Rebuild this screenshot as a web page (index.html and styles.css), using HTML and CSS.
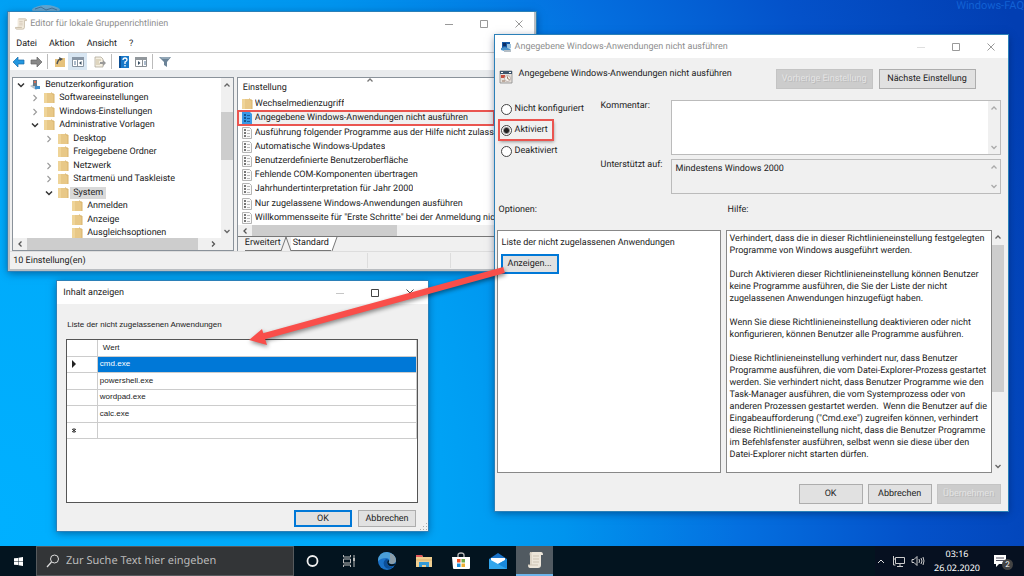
FILE: index.html
```html
<!DOCTYPE html>
<html lang="de">
<head>
<meta charset="utf-8">
<meta name="viewport" content="width=device-width, initial-scale=1">
<title>Editor für lokale Gruppenrichtlinien</title>
<link rel="stylesheet" href="styles.css">
</head>
<body>
<svg class="defs" aria-hidden="true">
  <symbol id="folder" viewBox="0 0 12 12"><path d="M1 1h7l1 1h2v9H1z" fill="#e8c887"/><path d="M1 1h3v10H1z" fill="#efd498"/><path d="M8 1h1v1h2v9" fill="none" stroke="#d9b36a"/></symbol>
  <symbol id="policy" viewBox="0 0 12 12"><path d="M1.500.500h7l2 2v9h-9z" fill="#fafafa" stroke="#b5b5b5"/><path d="M3 2h2v2H3zm0 3h2v2H3zm0 3h2v2H3z" fill="#777"/><path d="M6 3.500h3M6 6.500h3M6 9.500h3" stroke="#bbb"/></symbol>
  <symbol id="policy-on" viewBox="0 0 12 12"><path d="M1 0h8l2 2v10H1z" fill="#3898e6"/><path d="M3 2h2v2H3zm0 3h2v2H3zm0 3h2v2H3z" fill="#12548f"/><path d="M6 3.500h3M6 6.500h3M6 9.500h3" stroke="#175f9e"/></symbol>
  <symbol id="right" viewBox="0 0 8 8"><path d="M2.500 1l3 3-3 3" fill="none" stroke="#999" stroke-width="1.100"/></symbol>
  <symbol id="open" viewBox="0 0 8 8"><path d="M1 2.500l3 3 3-3" fill="none" stroke="#333" stroke-width="1.500"/></symbol>
  <symbol id="a-up" viewBox="0 0 8 8"><path d="M1.500 5.500L4 3l2.500 2.500" fill="none" stroke="currentColor" stroke-width="1.300"/></symbol>
  <symbol id="a-down" viewBox="0 0 8 8"><path d="M1.500 3L4 5.500 6.500 3" fill="none" stroke="currentColor" stroke-width="1.300"/></symbol>
  <symbol id="a-left" viewBox="0 0 8 8"><path d="M5.500 1.500L3 4l2.500 2.500" fill="none" stroke="currentColor" stroke-width="1.300"/></symbol>
  <symbol id="a-right" viewBox="0 0 8 8"><path d="M3 1.500L5.500 4 3 6.500" fill="none" stroke="currentColor" stroke-width="1.300"/></symbol>
  <symbol id="min" viewBox="0 0 8 8"><path d="M0 4.500h8" stroke="currentColor"/></symbol>
  <symbol id="max" viewBox="0 0 8 8"><path d="M.500.500h7v7h-7z" fill="none" stroke="currentColor"/></symbol>
  <symbol id="close" viewBox="0 0 8 8"><path d="M.500.500l7 7m0-7l-7 7" fill="none" stroke="currentColor"/></symbol>
  <symbol id="scroll" viewBox="0 0 14 14"><path d="M4 1h8q1.500 0 1.500 2H11v8q0 2-2 2H2q-1.500 0-1.500-2H3V3q0-2 1-2z" fill="#f1e9dc"/><path d="M4 1h8q1.500 0 1.500 2H11v8q0 2-2 2H2q-1.500 0-1.500-2H8" fill="none" stroke="#b9ab95" stroke-width=".8"/><path d="M5 4h4M5 6h4M5 8h4" stroke="#cbbfae" stroke-width=".8"/></symbol>
</svg>

<main class="desktop">
  <span class="watermark">Windows-FAQ</span>
  <svg class="bin" viewBox="0 0 28 8" aria-hidden="true"><path d="M0 4q6-4 14-4t14 4l-1 4H1z" fill="#8aa8c0" opacity=".7"/><path d="M3 4l6-2 5 3 6-2 5 2" fill="none" stroke="#47759a"/></svg>

  <section class="window editor" aria-label="Editor für lokale Gruppenrichtlinien">
    <header class="titlebar">
      <svg class="i12"><use href="#scroll"/></svg>
      <h1 class="title muted">Editor für lokale Gruppenrichtlinien</h1>
      <div class="controls"><button aria-label="Minimieren"><svg><use href="#min"/></svg></button><button aria-label="Maximieren"><svg><use href="#max"/></svg></button><button aria-label="Schließen"><svg><use href="#close"/></svg></button></div>
    </header>
    <nav class="menu"><button>Datei</button><button>Aktion</button><button>Ansicht</button><button>?</button></nav>
    <div class="toolbar">
      <button aria-label="Zurück"><svg viewBox="0 0 14 12"><path d="M1 6l5-5v3h6v4H6v3z" fill="#2297e0" stroke="#176aa8" stroke-width=".7"/></svg></button>
      <button aria-label="Vorwärts"><svg viewBox="0 0 14 12"><path d="M13 6L8 1v3H2v4h6v3z" fill="#888" stroke="#666" stroke-width=".7"/></svg></button>
      <i class="sep"></i>
      <button aria-label="Nach oben"><svg viewBox="0 0 14 12"><path d="M2 3h5l1-1h4v9H2z" fill="#e6c27c"/><path d="M4 8q1-5 4-5" fill="none" stroke="#4c5358" stroke-width="1.500"/><path d="M6 1l4 2-3 2z" fill="#4c5358"/></svg></button>
      <button class="pressed" aria-label="Struktur anzeigen"><svg viewBox="0 0 14 12"><path d="M1.500 1.500h11v9h-11z" fill="#fff" stroke="#8793a0"/><path d="M1 1h12v3H1z" fill="#8997a6"/><path d="M6.500 4v7" stroke="#8793a0"/><path d="M3 6h2M3 8h2" stroke="#59799b"/><path d="M10.500 5v4L8 7z" fill="#3b5064"/></svg></button>
      <i class="gap"></i>
      <button aria-label="Liste exportieren"><svg viewBox="0 0 14 12"><path d="M2 1h6l2 2v8H2z" fill="#f4efe2" stroke="#a7a08f" stroke-width=".7"/><path d="M3 4h5M3 6h3M3 8h4" stroke="#b5a67e" stroke-width=".7"/><path d="M7 6h3V4l3 3-3 3V8H7z" fill="#999"/></svg></button>
      <i class="sep"></i>
      <button aria-label="Hilfe"><svg viewBox="0 0 14 12"><path d="M2 0h10v12H2z" fill="#1878c8"/><path d="M2 0h2v12H2z" fill="#0d4f94"/><path d="M6 4q0-2 2-2t2 2q0 1-2 2v2M8 9v1.500" fill="none" stroke="#fff" stroke-width="1.300"/></svg></button>
      <button aria-label="Aktionsbereich"><svg viewBox="0 0 14 12"><path d="M1.500 1.500h11v9h-11z" fill="#fff" stroke="#8a8f94"/><path d="M1 1h12v3H1z" fill="#92989d"/><path d="M8.500 4v7" stroke="#8a8f94"/><path d="M10 6h2M10 8h2" stroke="#59799b"/><path d="M4 5v4l2.500-2z" fill="#3b5064"/></svg></button>
      <i class="sep"></i>
      <button aria-label="Filter"><svg viewBox="0 0 14 12"><path d="M1 1h12L9 6v5l-3-2V6z" fill="#6b8397"/><path d="M2 1h10l-1 2H4z" fill="#93a7b7"/></svg></button>
    </div>
    <div class="panes">
      <div class="tree-pane">
        <div class="tree-view">
          <ul class="tree">
            <li class="l0"><svg class="tw"><use href="#open"/></svg><svg class="i12" viewBox="0 0 12 12"><path d="M1 7l4-2 6 3-4 3z" fill="#b7c4ce"/><path d="M4 1h4v6H4z" fill="#697986"/><path d="M5 2h2v2H5z" fill="#d86d55"/><path d="M6 7h5v3H6z" fill="#3e8ecc"/></svg><span>Benutzerkonfiguration</span></li>
            <li class="l1"><svg class="tw"><use href="#right"/></svg><svg class="i12"><use href="#folder"/></svg><span>Softwareeinstellungen</span></li>
            <li class="l1"><svg class="tw"><use href="#right"/></svg><svg class="i12"><use href="#folder"/></svg><span>Windows-Einstellungen</span></li>
            <li class="l1"><svg class="tw"><use href="#open"/></svg><svg class="i12"><use href="#folder"/></svg><span>Administrative Vorlagen</span></li>
            <li class="l2"><svg class="tw"><use href="#right"/></svg><svg class="i12"><use href="#folder"/></svg><span>Desktop</span></li>
            <li class="l2"><i class="tw"></i><svg class="i12"><use href="#folder"/></svg><span>Freigegebene Ordner</span></li>
            <li class="l2"><svg class="tw"><use href="#right"/></svg><svg class="i12"><use href="#folder"/></svg><span>Netzwerk</span></li>
            <li class="l2"><svg class="tw"><use href="#right"/></svg><svg class="i12"><use href="#folder"/></svg><span>Startmenü und Taskleiste</span></li>
            <li class="l2 current"><svg class="tw"><use href="#open"/></svg><svg class="i12"><use href="#folder"/></svg><span>System</span></li>
            <li class="l3"><i class="tw"></i><svg class="i12"><use href="#folder"/></svg><span>Anmelden</span></li>
            <li class="l3"><i class="tw"></i><svg class="i12"><use href="#folder"/></svg><span>Anzeige</span></li>
            <li class="l3"><i class="tw"></i><svg class="i12"><use href="#folder"/></svg><span>Ausgleichsoptionen</span></li>
          </ul>
          <div class="vbar tree-bar"><svg><use href="#a-up"/></svg><i></i><svg><use href="#a-down"/></svg></div>
        </div>
        <div class="hbar tree-hbar"><svg><use href="#a-left"/></svg><i></i><svg><use href="#a-right"/></svg></div>
      </div>
      <div class="list-pane">
        <div class="list-head"><svg class="sort"><use href="#a-up"/></svg>Einstellung</div>
        <ul class="list">
          <li><svg class="i12"><use href="#folder"/></svg><span>Wechselmedienzugriff</span></li>
          <li class="marked"><svg class="i12"><use href="#policy-on"/></svg><span>Angegebene Windows-Anwendungen nicht ausführen</span></li>
          <li><svg class="i12"><use href="#policy"/></svg><span>Ausführung folgender Programme aus der Hilfe nicht zulassen</span></li>
          <li><svg class="i12"><use href="#policy"/></svg><span>Automatische Windows-Updates</span></li>
          <li><svg class="i12"><use href="#policy"/></svg><span>Benutzerdefinierte Benutzeroberfläche</span></li>
          <li><svg class="i12"><use href="#policy"/></svg><span>Fehlende COM-Komponenten übertragen</span></li>
          <li><svg class="i12"><use href="#policy"/></svg><span>Jahrhundertinterpretation für Jahr 2000</span></li>
          <li><svg class="i12"><use href="#policy"/></svg><span>Nur zugelassene Windows-Anwendungen ausführen</span></li>
          <li><svg class="i12"><use href="#policy"/></svg><span>Willkommensseite für "Erste Schritte" bei der Anmeldung nic...</span></li>
        </ul>
        <div class="hbar list-hbar"><svg><use href="#a-left"/></svg><i></i></div>
        <div class="tabs"><button>Erweitert</button><svg viewBox="0 0 10 14"><path d="M0 14L5 0M5 0l5 14" fill="none" stroke="#777"/></svg><button class="on">Standard</button><svg viewBox="0 0 10 14"><path d="M0 0h6L1 14H0z" fill="#fff"/><path d="M1 14L6 0" fill="none" stroke="#777"/></svg></div>
      </div>
    </div>
    <footer class="status"><span>10 Einstellung(en)</span><i></i><i></i></footer>
  </section>

  <section class="window policy-win" aria-label="Richtlinie">
    <header class="titlebar">
      <svg class="i12" viewBox="0 0 12 12"><path d="M2 1h8v6H2z" fill="#1558a4"/><path d="M3 2h3v3H3z" fill="#0b2f66"/><path d="M7 3h4v4H7z" fill="#9cc2dd"/><path d="M1 7l4-1 6 2-3 3-7-2z" fill="#4b93cb"/><path d="M4 9h7v2H4z" fill="#b4bec6"/></svg>
      <h2 class="title muted">Angegebene Windows-Anwendungen nicht ausführen</h2>
      <div class="controls"><button class="off" aria-label="Minimieren"><svg><use href="#min"/></svg></button><button aria-label="Maximieren"><svg><use href="#max"/></svg></button><button aria-label="Schließen"><svg><use href="#close"/></svg></button></div>
    </header>
    <div class="policy-head">
      <svg viewBox="0 0 14 14"><path d="M1 1h12v12H1z" fill="#e6e1dc" stroke="#888" stroke-width=".8"/><path d="M1 1h12v3H1z" fill="#3f556b"/><path d="M2 2h2v1H2zm8 0h2v1h-2z" fill="#fff"/><path d="M2 5h4v3H2z" fill="#c84d3d"/><circle cx="8.500" cy="8.500" r="3" fill="#f5f1ea" stroke="#a99" stroke-width=".7"/><path d="M8.500 6.500v2l2 1M3 11h3" fill="none" stroke="#96755f"/></svg>
      <strong>Angegebene Windows-Anwendungen nicht ausführen</strong>
      <button class="btn" disabled>Vorherige Einstellung</button>
      <button class="btn">Nächste Einstellung</button>
    </div>
    <div class="settings">
      <div class="radios">
        <label><input type="radio" name="state">Nicht konfiguriert</label>
        <label class="marked"><input type="radio" name="state" checked>Aktiviert</label>
        <label><input type="radio" name="state">Deaktiviert</label>
      </div>
      <div class="fields">
        <label for="comment">Kommentar:</label>
        <div class="box comment"><textarea id="comment"></textarea><div class="vbar faint"><svg><use href="#a-up"/></svg><svg><use href="#a-down"/></svg></div></div>
        <label for="supported">Unterstützt auf:</label>
        <div class="box supported"><textarea id="supported" readonly>Mindestens Windows 2000</textarea><div class="vbar faint"><svg><use href="#a-up"/></svg><svg><use href="#a-down"/></svg></div></div>
      </div>
    </div>
    <div class="details">
      <h3>Optionen:</h3><h3 class="help-title">Hilfe:</h3>
      <div class="options"><p>Liste der nicht zugelassenen Anwendungen</p><button class="btn focus">Anzeigen...</button></div>
      <div class="help-wrap">
        <div class="help">
          <p>Verhindert, dass die in dieser Richtlinieneinstellung festgelegten<br>Programme von Windows ausgeführt werden.</p>
          <p>Durch Aktivieren dieser Richtlinieneinstellung können Benutzer<br>keine Programme ausführen, die Sie der Liste der nicht<br>zugelassenen Anwendungen hinzugefügt haben.</p>
          <p>Wenn Sie diese Richtlinieneinstellung deaktivieren oder nicht<br>konfigurieren, können Benutzer alle Programme ausführen.</p>
          <p>Diese Richtlinieneinstellung verhindert nur, dass Benutzer<br>Programme ausführen, die vom Datei-Explorer-Prozess gestartet<br>werden. Sie verhindert nicht, dass Benutzer Programme wie den<br>Task-Manager ausführen, die vom Systemprozess oder von<br>anderen Prozessen gestartet werden.&nbsp; Wenn die Benutzer auf die<br>Eingabeaufforderung ("Cmd.exe") zugreifen können, verhindert<br>diese Richtlinieneinstellung nicht, dass die Benutzer Programme<br>im Befehlsfenster ausführen, selbst wenn sie diese über den<br>Datei-Explorer nicht starten dürfen.</p>
        </div>
        <div class="vbar help-bar"><svg><use href="#a-up"/></svg><i></i><svg><use href="#a-down"/></svg></div>
      </div>
    </div>
    <footer class="actions"><button class="btn">OK</button><button class="btn">Abbrechen</button><button class="btn" disabled>Übernehmen</button></footer>
  </section>

  <section class="window content-win" aria-label="Inhalt anzeigen">
    <header class="titlebar">
      <h2 class="title">Inhalt anzeigen</h2>
      <div class="controls"><button class="off" aria-label="Minimieren"><svg><use href="#min"/></svg></button><button aria-label="Maximieren"><svg><use href="#max"/></svg></button><button aria-label="Schließen"><svg><use href="#close"/></svg></button></div>
    </header>
    <p class="caption" id="apps">Liste der nicht zugelassenen Anwendungen</p>
    <div class="grid-box">
      <table aria-labelledby="apps">
        <thead><tr><th></th><th>Wert</th></tr></thead>
        <tbody>
          <tr class="sel"><td><svg viewBox="0 0 6 8"><path d="M1 0l4 4-4 4z" fill="#222"/></svg></td><td>cmd.exe</td></tr>
          <tr><td></td><td>powershell.exe</td></tr>
          <tr><td></td><td>wordpad.exe</td></tr>
          <tr><td></td><td>calc.exe</td></tr>
          <tr><td><svg viewBox="0 0 6 8"><path d="M3 2v5M1 3l4 3M5 3L1 6" stroke="#333"/></svg></td><td></td></tr>
        </tbody>
      </table>
    </div>
    <footer class="actions"><button class="btn focus">OK</button><button class="btn">Abbrechen</button></footer>
    <svg class="grip" viewBox="0 0 8 8"><path d="M6 0h1v1H6zM3 3h1v1H3zm3 0h1v1H6zM0 6h1v1H0zm3 0h1v1H3zm3 0h1v1H6z" fill="#aaa"/></svg>
  </section>

  <svg class="arrow" viewBox="0 0 260 80" aria-hidden="true"><path d="M255 3L12 70" stroke="#f94e4a" stroke-width="6"/><path d="M0 73L13 62 18 78z" fill="#f94e4a"/></svg>
</main>

<footer class="taskbar">
  <button class="start" aria-label="Start"><svg viewBox="0 0 10 10"><path d="M0 1.500L4.500 1v3.700H0zM5 .9L10 0v4.700H5zM0 5.200h4.500V9L0 8.500zM5 5.200h5V10l-5-.9z" fill="#fff"/></svg></button>
  <label class="search"><svg viewBox="0 0 14 14"><circle cx="8.500" cy="5" r="4" fill="none" stroke="#ddd"/><path d="M5.500 8L1 13" stroke="#ddd" stroke-width="1.200"/></svg><input type="text" placeholder="Zur Suche Text hier eingeben" aria-label="Suche"></label>
  <nav class="apps">
    <button aria-label="Cortana"><svg viewBox="0 0 20 20"><circle cx="9.500" cy="10" r="5" fill="none" stroke="#eee" stroke-width="1.800"/></svg></button>
    <button aria-label="Taskansicht"><svg viewBox="0 0 20 20"><path d="M3.500 4v2h7V4M3.500 16v-2h7v2M3.500 8h7v4h-7zM14 4v12" fill="none" stroke="#bbb"/><path d="M13 7h2v3h-2z" fill="#bbb"/></svg></button>
    <button aria-label="Edge"><svg viewBox="0 0 20 20"><circle cx="10" cy="10" r="9" fill="#1a72c8"/><path d="M1 9q1-8 9-8 8 1 9 8 0 3-4 4-3 0-3-2 1-4-3-4-5 0-8 3z" fill="#4a9fd8"/><path d="M13 2q6 2 6 8-1 3-4 3-3 0-3-2 2-2 1-4z" fill="#8b9da8"/><path d="M9 8q-5 4 0 9 5 2 8-2-4 2-6-1-2-2 0-4 1-2-2-2z" fill="#0c4f98"/><path d="M11.500 8.500q1 2 0 3.500 2 2 7 .500l-1 2q-5 2-7-1.500-1-2 1-4.500z" fill="#03141f"/></svg></button>
    <button aria-label="Explorer"><svg viewBox="0 0 20 20"><path d="M2 4h6l1 2h9v10H2z" fill="#f0cf91"/><path d="M2 4h6l1 2H2z" fill="#e0575b"/><path d="M5 16v-5h10v5h-3v-2H8v2z" fill="#369bd8"/><path d="M2 9h16" stroke="#ddb36e"/></svg></button>
    <button aria-label="Store"><svg viewBox="0 0 20 20"><path d="M7 6V4q0-2 3-2t3 2v2" fill="none" stroke="#bbb" stroke-width="1.300"/><path d="M1 6h18v11q0 1-1 1H3q-1 0-1-1z" fill="#fff"/><path d="M6 8h3.500v3.500H6z" fill="#f25022"/><path d="M10.500 8H14v3.500h-3.500z" fill="#71a94a"/><path d="M6 12.500h3.500V16H6z" fill="#188fdb"/><path d="M10.500 12.500H14V16h-3.500z" fill="#efb034"/></svg></button>
    <button aria-label="Mail"><svg viewBox="0 0 20 20"><path d="M1 8l9-6 9 6v9H1z" fill="#1b73c8"/><path d="M3 7h14v4l-7 4-7-4z" fill="#fff"/><path d="M1 8l9 5 9-5v10H1z" fill="#31a6ec"/><path d="M10 13l9-5v10z" fill="#1989db"/></svg></button>
    <button class="active" aria-label="Gruppenrichtlinien"><svg viewBox="0 0 20 20"><path d="M6 2h10q2 0 2 3h-2v10q0 3-3 3H5q-2 0-2-3h2V6Q4 2 6 2z" fill="#ece5d9"/><path d="M7 2q-2 1-1 4v9M8 6h6M8 9h6M8 12h6M3 15h10" fill="none" stroke="#cdc3b3"/></svg></button>
  </nav>
  <div class="tray">
    <svg viewBox="0 0 12 12"><path d="M3 8l3-3 3 3" fill="none" stroke="#ddd"/></svg>
    <svg class="net" viewBox="0 0 14 12"><path d="M3.500 2.500h9v6h-9zM8 9v2M5 11.500h6M1.500 1v3h2M1.500 4v6h2" fill="none" stroke="#ccc"/></svg>
    <svg class="net" viewBox="0 0 14 12"><path d="M1 4.500h2l3-3v9l-3-3H1zM8 4q1 2 0 4M10 3q2 3 0 6M12 2q2 4 0 8" fill="none" stroke="#ccc"/></svg>
    <time datetime="2020-02-26T03:16">03:16<br>26.02.2020</time>
    <button class="notice" aria-label="2 Benachrichtigungen"><svg viewBox="0 0 14 14"><path d="M1 1h12v9H6l-3 3v-3H1z" fill="#fff"/><path d="M3 4h8M3 6.500h8" stroke="#556"/></svg><span>2</span></button>
  </div>
</footer>
</body>
</html>
```

FILE: styles.css
```css
* { box-sizing: border-box; }
body {
  margin: 0;
  min-height: 100vh;
  display: flex;
  flex-direction: column;
  overflow: hidden;
  color: #222;
  font: 9px/12px Roboto, "Open Sans", sans-serif;
  text-rendering: geometricPrecision;
  background: radial-gradient(120% 240% at 0 90%, #00b0ff 0, #00a8f8 32%, #0094ee 46%, #0470e0 60%, #0452ca 74%, #023eb2 90%);
}
h1, h2, h3, p, ul { margin: 0; padding: 0; font: inherit; list-style: none; }
button, input, textarea { font: inherit; color: inherit; text-rendering: inherit; margin: 0; padding: 0; border: 0; border-radius: 0; background: none; }
svg { display: block; flex: none; }
.defs { position: absolute; width: 0; height: 0; }
.i12 { width: 12px; height: 12px; }

.desktop { position: relative; flex: 1; }
.watermark { position: absolute; top: 0; right: 0; font-size: 11px; line-height: 12px; color: #1261d4; }
.bin { position: absolute; left: 32px; top: 5px; width: 28px; height: 8px; }

.window { position: absolute; background: #f0f0f0; box-shadow: 0 0 0 1px #2b80b8, 0 2px 8px rgba(0, 20, 60, .5); }
.editor { left: 1%; top: 12px; width: 51.500%; border: 2px solid #b9bdc1; border-top: 0; margin-left: -2px; }
.policy-win { left: 48.300%; top: 35px; width: 50.100%; }
.content-win { left: 5.600%; top: 281px; width: 36.200%; }

.titlebar { height: 23px; display: flex; align-items: center; gap: 3px; padding: 0 5px; background: #fff; }
.title { flex: 1; white-space: nowrap; }
.muted { color: #8e8e8e; }
.controls { display: flex; gap: 27px; margin-right: 8px; color: #999; }
.controls svg { width: 8px; height: 8px; }
.controls .off { opacity: .3; }
.editor .titlebar { padding-right: 3px; }
.content-win .controls { color: #444; }
.content-win .titlebar { padding: 0 6px; }

.menu { height: 18px; display: flex; gap: 12px; padding: 0 6px; align-items: center; background: #fff; border-bottom: 1px solid #ccc; }
.toolbar { height: 17px; display: flex; align-items: center; background: #fff; }
.toolbar button { width: 17px; height: 17px; display: grid; place-items: center; }
.toolbar svg { width: 14px; height: 12px; }
.toolbar .pressed { background: #d8e6f2; width: 19px; }
.sep { width: 1px; height: 15px; background: #bbb; margin: 0 3px; }
.gap { width: 4px; }

.panes { display: flex; gap: 3px; border-top: 7px solid #e9ebed; padding-left: 2px; }
.tree-pane { flex: 0 0 42.500%; border: 1px solid #8a929a; background: #fff; }
.tree-view { display: flex; height: 160px; overflow: hidden; }
.tree { flex: 1; height: 162px; display: grid; grid-auto-rows: 1fr; }
.tree li { display: flex; align-items: center; gap: 4px; white-space: nowrap; }
.tw { width: 8px; height: 8px; flex: none; }
.l0 { padding-left: 4px; }
.l1 { padding-left: 18px; }
.l2 { padding-left: 32px; }
.l3 { padding-left: 46px; }
.current span { background: #d9d9d9; padding: 0 3px; margin-left: -3px; }

.vbar { width: 12px; flex: none; display: flex; flex-direction: column; align-items: center; justify-content: space-between; padding: 3px 0; background: #f0f0f0; color: #666; }
.vbar svg, .hbar svg { width: 8px; height: 8px; }
.vbar i { width: 12px; background: #cdcdcd; }
.tree-bar i { height: 48px; margin-bottom: 44px; }
.faint { color: #aaa; }
.hbar { height: 12px; display: flex; align-items: center; gap: 3px; padding: 0 3px; background: #f0f0f0; color: #555; }
.hbar i { height: 12px; background: #cdcdcd; }
.tree-hbar i { flex: 0 0 80%; }
.tree-hbar svg:last-child { margin-left: 8px; }

.list-pane { flex: 1; min-width: 0; border: 1px solid #8a929a; border-bottom: 0; border-right: 0; background: #fff; }
.list-head { height: 19px; padding: 4px 5px; position: relative; }
.sort { position: absolute; left: 128px; top: -2px; width: 8px; height: 8px; color: #777; }
.list { height: 128px; display: grid; grid-auto-rows: 1fr; grid-template-columns: 1fr; margin-right: 40px; }
.list li { display: flex; align-items: center; gap: 2px; padding-left: 3px; white-space: nowrap; min-width: 0; }
.list span { overflow: hidden; }
.list .marked { outline: 2px solid #ea5550; outline-offset: -1px; background: #f0f0f0; }
.list-hbar { height: 11px; }
.list-hbar i { height: 11px; flex: 0 0 50%; }
.tabs { display: flex; height: 15px; border-top: 1px solid #777; background: #f0f0f0; padding-left: 7px; }
.tabs button { line-height: 13px; border-bottom: 1px solid #777; }
.tabs .on { background: #fff; padding: 0 2px; }
.tabs svg { width: 10px; height: 14px; }
.status { height: 18px; display: flex; align-items: center; padding-left: 3px; border-top: 1px solid #ddd; }
.status span { flex: 0 0 68%; }
.status i { width: 100px; height: 15px; border-left: 1px solid #ddd; }

.btn { min-width: 64px; height: 20px; padding: 0; background: #e1e1e1; border: 1px solid #adadad; white-space: nowrap; }
.btn:disabled { background: #ccc; border-color: #c4c4c4; color: #e4e4e4; text-shadow: 1px 1px 0 #bbb; }
.btn.focus { border: 2px solid #0078d7; }

.policy-head { display: flex; align-items: center; gap: 6px; padding: 5px 32px 8px 4px; height: 42px; }
.policy-head svg { width: 14px; height: 14px; margin-bottom: 2px; }
.policy-head strong { flex: 1; font-weight: 400; white-space: nowrap; padding-bottom: 8px; }
.policy-head .btn { flex: 0 0 97px; margin-bottom: -2px; }
.settings { display: flex; padding: 0 7px 0 4px; }
.radios { flex: 0 0 102px; display: flex; flex-direction: column; align-items: flex-start; gap: 1px; white-space: nowrap; margin-top: -1px; }
.radios label { display: flex; align-items: center; gap: 3px; height: 20px; padding: 0 5px 0 2px; }
.radios .marked { outline: 2px solid #ea5550; outline-offset: -1px; box-shadow: 1px 2px 3px #999; }
.radios input { appearance: none; width: 11px; height: 11px; border: 1px solid #444; border-radius: 50%; background: #fff; }
.radios input:checked { background: radial-gradient(circle, #222 0 2px, #fff 4px); }
.fields { flex: 1; display: grid; grid-template-columns: 70px 1fr; gap: 4px 0; }
.box { display: flex; border: 1px solid #bbb; }
.box textarea { flex: 1; resize: none; padding: 3px 4px; min-width: 0; }
.comment { height: 55px; background: #fff; }
.supported { height: 35px; }

.details { display: grid; grid-template-columns: 224px minmax(0, 1fr); column-gap: 5px; padding: 10px 4px 0 2px; }
.details h3 { height: 26px; padding-left: 2px; }
.options, .help { border: 1px solid #888; background: #fff; }
.options { padding: 6px 4px; }
.options .btn { min-width: 58px; margin: 5px 0 0 -1px; }
.help-wrap { display: flex; }
.help { flex: 1; min-width: 0; height: 243px; padding: 2px 3px; white-space: nowrap; }
.help p + p { margin-top: 12px; }
.help-bar i { height: 147px; margin-bottom: 67px; }
.actions { display: flex; justify-content: flex-end; gap: 5px; padding: 11px 7px 7px; }

.caption { padding: 15px 10px 8px; }
.caption, .grid-box { font-family: "Liberation Sans", Arial, sans-serif; font-size: 8px; text-rendering: auto; }
.grid-box { height: 164px; margin: 0 10px 0 9px; border: 1px solid #555; background: #fff; }
table { width: 100%; height: 99px; border-collapse: collapse; table-layout: fixed; }
th, td { height: 16px; padding: 0 2px; border-bottom: 1px solid #ccc; border-right: 1px solid #ccc; font-weight: 400; text-align: left; line-height: 12px; }
th:first-child { width: 30px; }
th + th { padding-left: 5px; }
td svg { width: 6px; height: 8px; margin-left: 2px; }
.sel td + td { background: #0078d7; color: #fff; }
.content-win .actions { padding: 7px 12px 4px; gap: 6px; }
.content-win .btn { min-width: 58px; height: 17px; line-height: 12px; }
.grip { position: absolute; right: 0; bottom: 0; width: 8px; height: 8px; }
.arrow { position: absolute; left: 24.300%; top: 267px; width: 25.400%; filter: drop-shadow(1px 2px 2px rgba(0, 0, 0, .45)); }

.taskbar { height: 30px; display: flex; color: #fff; background: #03141f; position: relative; }
.start { width: 36px; display: grid; place-items: center; }
.start svg { width: 9px; height: 9px; }
.search { flex: 0 0 258px; display: flex; align-items: center; gap: 6px; padding-left: 9px; background: #333537; border: 1px solid #565a5d; }
.search svg { width: 14px; height: 14px; }
.search input { flex: 1; font-family: "Noto Sans", sans-serif; font-size: 11px; outline: 0; }
.search input::placeholder { color: #bbb; opacity: 1; }
.apps { display: flex; }
.apps button { width: 37px; display: grid; place-items: center; }
.apps svg { width: 20px; height: 20px; }
.apps .active { background: #515a61; border-bottom: 2px solid #6cb4ea; }
.tray { margin-left: auto; display: flex; align-items: center; gap: 5px; padding-right: 11px; background: #061020; }
.tray > svg { width: 12px; height: 12px; }
.tray .net { width: 14px; }
.tray time { font-family: "Noto Sans", sans-serif; text-align: center; line-height: 14px; padding: 0 8px 0 4px; }
.notice { position: relative; width: 20px; height: 18px; }
.notice svg { width: 14px; height: 14px; }
.notice span { position: absolute; right: 0; bottom: 0; width: 11px; height: 11px; border-radius: 50%; background: #444; line-height: 11px; font-size: 8px; }
```
